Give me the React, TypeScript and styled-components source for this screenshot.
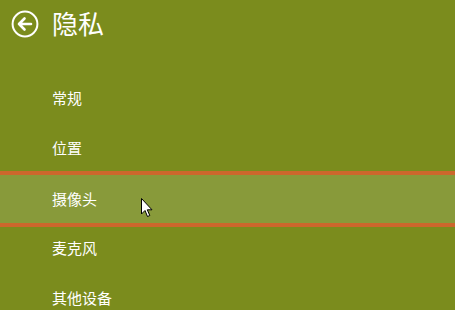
import React from "react";
import styled, { createGlobalStyle } from "styled-components";

const Global = createGlobalStyle`
  html, body { margin: 0; padding: 0; background: #7b8c1d; }
  body { font-family: "Noto Sans CJK SC", "Microsoft YaHei", sans-serif; }
`;

const Page = styled.div`
  position: relative;
  width: 455px;
  height: 310px;
  overflow: hidden;
  background: #7b8c1d;
  color: #ffffff;
`;

const Header = styled.div`
  display: flex;
  align-items: center;
  height: 48px;
  padding-left: 11px;
  gap: 13px;
`;

const BackButton = styled.div`
  width: 28px;
  height: 28px;
  display: flex;
  align-items: center;
  justify-content: center;
`;

const Title = styled.div`
  font-size: 26px;
  line-height: 30px;
  font-weight: 400;
  margin-top: -2px;
`;

const List = styled.div`
  display: flex;
  flex-direction: column;
  margin-top: 24px;
`;

const Item = styled.div<{ $active?: boolean }>`
  box-sizing: border-box;
  display: flex;
  align-items: center;
  padding-left: 52px;
  font-size: 15px;
  height: ${(p) => (p.$active ? "56px" : "50px")};
  margin: ${(p) => (p.$active ? "-1px 0 -5px" : "0")};
  padding-bottom: ${(p) => (p.$active ? "2px" : "0")};
  background: ${(p) => (p.$active ? "#889a3a" : "transparent")};
  border-top: ${(p) => (p.$active ? "4px solid #cc672c" : "none")};
  border-bottom: ${(p) => (p.$active ? "4px solid #cc672c" : "none")};
`;

const Cursor = styled.svg`
  position: absolute;
  left: 141px;
  top: 198px;
`;

const items = ["常规", "位置", "摄像头", "麦克风", "其他设备"];

export default function App() {
  return (
    <Page>
      <Global />
      <Header>
        <BackButton>
          <svg width="28" height="28" viewBox="0 0 28 28">
            <circle cx="14" cy="14" r="12.4" fill="none" stroke="#fff" strokeWidth="2" />
            <path d="M8 14 H20 M13.5 8.5 L8 14 L13.5 19.5" fill="none" stroke="#fff" strokeWidth="2.6" strokeLinecap="round" strokeLinejoin="round" />
          </svg>
        </BackButton>
        <Title>隐私</Title>
      </Header>
      <List>
        {items.map((t, i) => (
          <Item key={t} $active={i === 2}>
            {t}
          </Item>
        ))}
      </List>
      <Cursor width="13" height="20" viewBox="0 0 13 20">
        <path d="M0.5 0.5 L0.5 16 L4 12.5 L6.5 18.5 L8.8 17.5 L6.3 11.8 L11 11.8 Z" fill="#fff" stroke="#000" strokeWidth="1" strokeLinejoin="round" />
      </Cursor>
    </Page>
  );
}
